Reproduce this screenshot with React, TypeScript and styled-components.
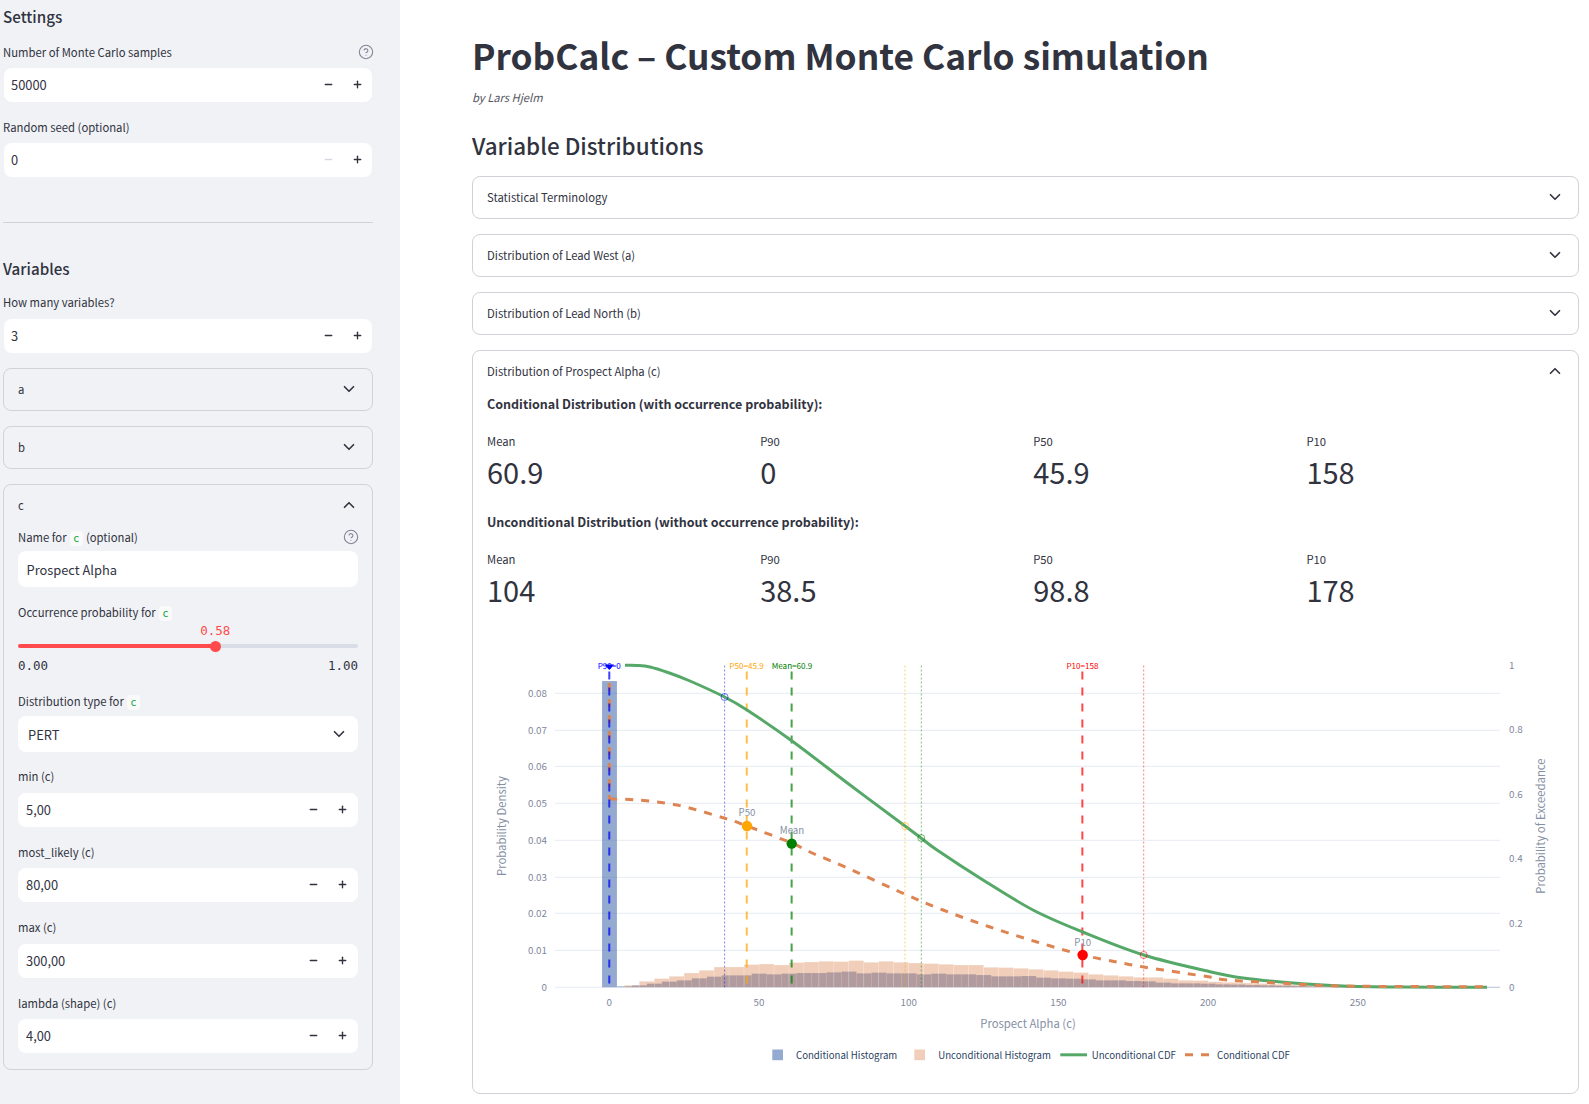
import React from "react";
import styled, { createGlobalStyle } from "styled-components";
import { ChevronDown, ChevronUp, CircleHelp, Minus, Plus } from "lucide-react";

const SANS = `"Noto Sans CJK JP", "Noto Sans", "Liberation Sans", sans-serif`;
const MONO = `"DejaVu Sans Mono", "Liberation Mono", monospace`;

const Global = createGlobalStyle`
  html, body { margin: 0; padding: 0; background: #fff; height: 1104px; overflow: hidden; }
  body { font-family: ${SANS}; color: #31333f; font-size: 14px; }
  * { box-sizing: border-box; }
`;

const Page = styled.div`
  display: flex;
  width: 1589px;
  height: 1104px;
  overflow: hidden;
`;

const Sidebar = styled.aside`
  flex: 0 0 400px;
  height: 1104px;
  background: #f0f2f6;
  padding: 0 27px 0 3px;
`;

const SideHeading = styled.h2<{ $top?: number }>`
  margin: ${(p) => p.$top ?? 0}px 0 0;
  height: 34px;
  line-height: 32px;
  font-size: 15.2px;
  font-weight: 500;
  color: #31333f;
`;

const Field = styled.div<{ $top: number }>`
  margin-top: ${(p) => p.$top}px;
`;

const LabelRow = styled.div<{ $gap?: number }>`
  display: flex;
  align-items: center;
  justify-content: space-between;
  height: 21px;
  margin-bottom: ${(p) => p.$gap ?? 5}px;
  font-size: 11.3px;
  color: #31333f;
`;

const Help = styled(CircleHelp)`
  color: #808495;
  flex: none;
  margin-right: -1px;
`;

const Chip = styled.code`
  display: inline-block;
  font-family: ${MONO};
  font-size: 10.5px;
  line-height: 14px;
  height: 15px;
  padding: 0 3.5px;
  margin: 0 3px;
  color: #09ab3b;
  background: #fafafa;
  border-radius: 4px;
  vertical-align: 0;
`;

const NumberBox = styled.div<{ $inset?: boolean }>`
  display: flex;
  align-items: center;
  height: 34px;
  margin: 0 ${(p) => (p.$inset ? 0 : 1)}px;
  padding: 0 ${(p) => (p.$inset ? 1 : 0)}px 0 ${(p) => (p.$inset ? 8 : 7)}px;
  background: #fff;
  border-radius: 8px;
  font-size: 12.85px;
`;

const NumberValue = styled.span`
  flex: 1;
`;

const StepButton = styled.span<{ $off?: boolean }>`
  display: flex;
  align-items: center;
  justify-content: center;
  width: 29px;
  height: 34px;
  color: ${(p) => (p.$off ? "#d5dae4" : "#31333f")};
`;

const Divider = styled.hr`
  margin: 45px 0 29px;
  border: 0;
  border-top: 1px solid #cfd1d6;
  height: 0;
`;

const Expander = styled.section<{ $top?: number }>`
  margin-top: ${(p) => p.$top ?? 15}px;
  border: 1px solid #d0d2d7;
  border-radius: 8px;
`;

const ExpanderHeader = styled.div`
  display: flex;
  align-items: center;
  justify-content: space-between;
  height: 41px;
  padding: 0 14px 0 14px;
  font-size: 11.3px;
  color: #31333f;
`;

const SideBody = styled.div`
  padding: 1px 14px 16px;
`;

const TextBox = styled.div`
  display: flex;
  align-items: center;
  justify-content: space-between;
  height: 36px;
  padding: 0 8.5px;
  background: #fff;
  border-radius: 8px;
  font-size: 12.85px;
`;

const SelectBox = styled(TextBox)`
  padding: 0 10px;
`;

const SliderBlock = styled.div`
  margin-top: 1px;
  margin-bottom: 16px;
`;

const SliderValue = styled.div`
  position: relative;
  height: 14px;
  font-family: ${MONO};
  font-size: 12.5px;
  line-height: 14px;
  color: #ff4b4b;
`;

const SliderValueText = styled.span`
  position: absolute;
  top: 0;
  transform: translateX(-50%);
`;

const Track = styled.div`
  position: relative;
  height: 4px;
  margin-top: 6.5px;
  border-radius: 2px;
  background: #d9dee6;
`;

const TrackFill = styled.div`
  height: 4px;
  border-radius: 2px;
  background: #ff4b4b;
`;

const Thumb = styled.div`
  position: absolute;
  top: -3.5px;
  width: 11px;
  height: 11px;
  margin-left: -5.5px;
  border-radius: 50%;
  background: #ff4b4b;
`;

const RangeRow = styled.div`
  display: flex;
  justify-content: space-between;
  height: 18px;
  margin-top: 9px;
  font-family: ${MONO};
  font-size: 12.5px;
  line-height: 18px;
  color: #31333f;
`;

const Main = styled.main`
  flex: 1;
  min-width: 0;
  padding: 25px 10.5px 0 72px;
`;

const Title = styled.h1`
  margin: 0;
  height: 60px;
  line-height: 60px;
  font-size: 35.3px;
  font-weight: 700;
  color: #31333f;
  white-space: nowrap;
`;

const Byline = styled.p`
  margin: 2px 0 0;
  height: 21px;
  line-height: 21px;
  font-size: 11.2px;
  font-style: italic;
  color: #55565f;
`;

const SectionTitle = styled.h3`
  margin: 18px 0 9.5px;
  height: 40px;
  line-height: 38px;
  font-size: 22.45px;
  font-weight: 500;
  color: #31333f;
`;

const MainBody = styled.div`
  padding: 1px 14px 0;
`;

const StatHeading = styled.p<{ $top?: number }>`
  margin: ${(p) => p.$top ?? 0}px 0 0;
  height: 21px;
  line-height: 21px;
  font-size: 12.5px;
  font-weight: 700;
`;

const MetricGrid = styled.div`
  display: grid;
  grid-template-columns: repeat(4, 1fr);
  column-gap: 16px;
  margin-top: 17px;
`;

const MetricLabel = styled.div`
  height: 21px;
  line-height: 21px;
  font-size: 11.25px;
`;

const MetricValue = styled.div`
  height: 40px;
  line-height: 39px;
  font-size: 29px;
`;

const ChartSvg = styled.svg`
  display: block;
  width: 1076px;
  height: 443px;
  margin-top: 40px;
`;

const Tick = styled.text`
  font-family: ${SANS};
  font-size: 9.8px;
  fill: #7f889c;
`;

const AxisTitle = styled.text`
  font-family: ${SANS};
  font-size: 11.3px;
  fill: #8590a5;
`;

const Callout = styled.text`
  font-family: ${SANS};
  font-size: 8.1px;
`;

const PointLabel = styled.text`
  font-family: ${SANS};
  font-size: 9.7px;
  fill: #858fa3;
`;

const LegendText = styled.text`
  font-family: ${SANS};
  font-size: 9.65px;
  fill: #2a3f5f;
`;

const Stepper = () => (
  <>
    <StepButton>
      <Minus size={11} strokeWidth={3} />
    </StepButton>
    <StepButton>
      <Plus size={11} strokeWidth={3} />
    </StepButton>
  </>
);

const NumberField = ({ label, value, top, inset, off, gap }: { label: string; value: string; top: number; inset?: boolean; off?: boolean; gap?: number }) => (
  <Field $top={top}>
    <LabelRow $gap={gap}>{label}</LabelRow>
    <NumberBox $inset={inset}>
      <NumberValue>{value}</NumberValue>
      {off ? (
        <>
          <StepButton $off>
            <Minus size={11} strokeWidth={3} />
          </StepButton>
          <StepButton>
            <Plus size={11} strokeWidth={3} />
          </StepButton>
        </>
      ) : (
        <Stepper />
      )}
    </NumberBox>
  </Field>
);

const Collapsed = ({ label, top }: { label: string; top?: number }) => (
  <Expander $top={top}>
    <ExpanderHeader>
      {label}
      <ChevronDown size={18} strokeWidth={2.2} />
    </ExpanderHeader>
  </Expander>
);

const Metrics = ({ items }: { items: [string, string][] }) => (
  <MetricGrid>
    {items.map(([k, v]) => (
      <div key={k}>
        <MetricLabel>{k}</MetricLabel>
        <MetricValue>{v}</MetricValue>
      </div>
    ))}
  </MetricGrid>
);

/* ---------- chart ---------- */
const X = (v: number) => 609.3 + 2.994 * v;
const BASE = 987.3;

const GRID = [693.3, 730.3, 766.3, 803.3, 840.3, 877.3, 913.3, 950.3, 987.3];
const LEFT_TICKS = ["0.08", "0.07", "0.06", "0.05", "0.04", "0.03", "0.02", "0.01", "0"];
const RIGHT_TICKS: [string, number][] = [["1", 665.3], ["0.8", 729.7], ["0.6", 794.3], ["0.4", 858.7], ["0.2", 923.3], ["0", 987.3]];
const X_TICKS = [0, 50, 100, 150, 200, 250];

const UNCOND = [2, 6, 8.7, 11, 14.3, 17, 20.3, 20.3, 22.7, 23.3, 22.3, 24.7, 25.3, 26, 25.7, 26.7, 25, 26, 25, 24.3, 23.7, 23, 22.3, 22.3, 20, 19.7, 19, 18, 17, 15.7, 14.7, 13, 12, 11, 10, 10, 8.7, 7, 6.7, 5.5, 5, 4.3, 3.7, 3, 2.5, 2, 1.5, 1.2, 1, 0.7, 0.5, 0.3, 0.2, 0.1];
const COND = [1, 2, 3.7, 5.7, 7, 9, 10.7, 12, 12, 13.7, 13, 13.7, 14.3, 14.3, 15, 15.7, 14, 14.7, 14, 14, 13, 13.7, 13, 13, 12.3, 11, 11, 11.3, 9.7, 9, 8.7, 8, 7, 7, 6.3, 6, 4.7, 4, 4, 3.7, 3, 2.8, 2.3, 2, 1.7, 1.3, 1, 0.8, 0.6, 0.4, 0.3, 0.2, 0.1];

const GREEN_CURVE: [number, number][] = [[625, 665.3], [637, 665.4], [650, 667], [668, 672.5], [690, 681], [724.6, 697], [747, 710], [791.7, 740.7], [850, 785], [905, 826], [921, 838], [937, 850], [983, 880], [1033, 910], [1082.7, 932], [1143.7, 955], [1210, 971.7], [1243, 978], [1293, 983], [1343, 986], [1400, 987], [1487, 987.2]];
const ORANGE_CURVE: [number, number][] = [[609.3, 799], [637, 800], [677, 805], [724, 818], [747, 826], [791.7, 843], [810, 852], [852, 870], [900, 892], [943, 910], [990, 927], [1037, 942], [1082.7, 955], [1117, 962], [1143.7, 967], [1183, 973], [1210, 977], [1227, 980], [1277, 983], [1343, 986], [1487, 986.8]];

const smooth = (pts: [number, number][]) => {
  let d = `M${pts[0][0]} ${pts[0][1]}`;
  for (let i = 0; i < pts.length - 1; i++) {
    const p0 = pts[Math.max(i - 1, 0)];
    const p1 = pts[i];
    const p2 = pts[i + 1];
    const p3 = pts[Math.min(i + 2, pts.length - 1)];
    const c1x = p1[0] + (p2[0] - p0[0]) / 6;
    const c1y = p1[1] + (p2[1] - p0[1]) / 6;
    const c2x = p2[0] - (p3[0] - p1[0]) / 6;
    const c2y = p2[1] - (p3[1] - p1[1]) / 6;
    d += ` C${c1x.toFixed(1)} ${c1y.toFixed(1)} ${c2x.toFixed(1)} ${c2y.toFixed(1)} ${p2[0]} ${p2[1]}`;
  }
  return d;
};

const BOLD_LINES: [number, string][] = [[X(45.9), "#ffa500"], [X(60.9), "#008000"], [X(158), "#ff0000"]];
const DOT_LINES: [number, string, number][] = [[724.6, "#0000ff", 697], [905, "#ffa500", 826], [921.3, "#008000", 838], [1143.7, "#ff0000", 955]];

const Chart = () => (
  <ChartSvg viewBox="487 650 1076 443">
    {GRID.map((y) => (
      <line key={y} x1={555} x2={1500} y1={y} y2={y} stroke="#e6eaf3" strokeWidth={1} />
    ))}
    {GRID.map((y, i) => (
      <Tick key={y} x={547} y={y + 3.5} textAnchor="end">{LEFT_TICKS[i]}</Tick>
    ))}
    {RIGHT_TICKS.map(([t, y]) => (
      <Tick key={t} x={1509} y={y + 3.5}>{t}</Tick>
    ))}
    {X_TICKS.map((v) => (
      <Tick key={v} x={X(v)} y={1006} textAnchor="middle">{v}</Tick>
    ))}
    <AxisTitle x={1028} y={1028} textAnchor="middle">Prospect Alpha (c)</AxisTitle>
    <AxisTitle transform="translate(506 826) rotate(-90)" textAnchor="middle">Probability Density</AxisTitle>
    <AxisTitle transform="translate(1545 826) rotate(-90)" textAnchor="middle">Probability of Exceedance</AxisTitle>

    <g fill="#4c72b0" fillOpacity={0.6} stroke="#fff" strokeOpacity={0.25} strokeWidth={0.5}>
      <rect x={602} y={681} width={15} height={BASE - 681} />
      {COND.map((h, i) => (
        <rect key={i} x={617 + i * 14.97} y={BASE - h} width={14.97} height={h} />
      ))}
    </g>
    <g fill="#dd8452" fillOpacity={0.4} stroke="#fff" strokeOpacity={0.35} strokeWidth={0.5}>
      {UNCOND.map((h, i) => (
        <rect key={i} x={624.3 + i * 14.97} y={BASE - h} width={14.97} height={h} />
      ))}
    </g>
    <line x1={1440} x2={1500} y1={BASE} y2={BASE} stroke="#b9c7df" strokeWidth={1} />

    {DOT_LINES.map(([x, c]) => (
      <line key={x} x1={x} x2={x} y1={665.5} y2={BASE} stroke={c} strokeOpacity={0.5} strokeWidth={1} strokeDasharray="2 2" />
    ))}
    {BOLD_LINES.map(([x, c]) => (
      <line key={x} x1={x} x2={x} y1={671.5} y2={BASE} stroke={c} strokeOpacity={0.72} strokeWidth={2} strokeDasharray="8 8" />
    ))}

    <path d={smooth(GREEN_CURVE)} fill="none" stroke="#55a868" strokeWidth={3} />
    <line x1={609.3} x2={609.3} y1={683} y2={799} stroke="#dd8452" strokeWidth={3} strokeDasharray="8 8" />
    <path d={smooth(ORANGE_CURVE)} fill="none" stroke="#dd8452" strokeWidth={3} strokeDasharray="8 8" />
    <line x1={609.3} x2={609.3} y1={671.5} y2={BASE} stroke="#0000ff" strokeOpacity={0.75} strokeWidth={2} strokeDasharray="8 8" />

    {DOT_LINES.map(([x, c, y]) => (
      <circle key={x} cx={x} cy={y} r={3.5} fill="none" stroke={c} strokeOpacity={0.55} strokeWidth={1} />
    ))}

    <path d="M604.5 664.5h9.6l-4.8 5.5z" fill="#0000ff" />
    <Callout x={609.3} y={668.6} textAnchor="middle" fill="#0000ff">P90=0</Callout>
    <Callout x={746.5} y={668.6} textAnchor="middle" fill="#ffa500">P50=45.9</Callout>
    <Callout x={792} y={668.6} textAnchor="middle" fill="#008000">Mean=60.9</Callout>
    <Callout x={1082.5} y={668.6} textAnchor="middle" fill="#ff0000">P10=158</Callout>

    <circle cx={747} cy={826} r={5.2} fill="#ffa500" />
    <circle cx={791.7} cy={843.6} r={5.2} fill="#008000" />
    <circle cx={1082.7} cy={955} r={5.2} fill="#ff0000" />
    <PointLabel x={747} y={816} textAnchor="middle">P50</PointLabel>
    <PointLabel x={792} y={833.5} textAnchor="middle">Mean</PointLabel>
    <PointLabel x={1082.7} y={945.5} textAnchor="middle">P10</PointLabel>

    <rect x={772.3} y={1049.5} width={10.7} height={10.7} fill="#4c72b0" fillOpacity={0.6} />
    <LegendText x={796} y={1058.5}>Conditional Histogram</LegendText>
    <rect x={914.3} y={1049.5} width={10.7} height={10.7} fill="#dd8452" fillOpacity={0.4} />
    <LegendText x={938.3} y={1058.5}>Unconditional Histogram</LegendText>
    <line x1={1060.3} x2={1087} y1={1054.8} y2={1054.8} stroke="#55a868" strokeWidth={3} />
    <LegendText x={1091.7} y={1058.5}>Unconditional CDF</LegendText>
    <line x1={1185} x2={1212} y1={1054.8} y2={1054.8} stroke="#dd8452" strokeWidth={3} strokeDasharray="8 8" />
    <LegendText x={1217} y={1058.5}>Conditional CDF</LegendText>
  </ChartSvg>
);

export default function App() {
  return (
    <Page>
      <Global />
      <Sidebar>
        <SideHeading>Settings</SideHeading>
        <Field $top={7.5}>
          <LabelRow>
            Number of Monte Carlo samples
            <Help size={16} strokeWidth={1.6} />
          </LabelRow>
          <NumberBox>
            <NumberValue>50000</NumberValue>
            <Stepper />
          </NumberBox>
        </Field>
        <NumberField label="Random seed (optional)" value="0" top={15} off />
        <Divider />
        <SideHeading>Variables</SideHeading>
        <NumberField label="How many variables?" value="3" top={6} gap={6} />
        <Collapsed label="a" />
        <Collapsed label="b" />
        <Expander>
          <ExpanderHeader>
            c
            <ChevronUp size={18} strokeWidth={2.2} />
          </ExpanderHeader>
          <SideBody>
            <LabelRow $gap={3.5}>
              <span>
                Name for<Chip>c</Chip>(optional)
              </span>
              <Help size={16} strokeWidth={1.6} />
            </LabelRow>
            <TextBox>Prospect Alpha</TextBox>
            <Field $top={14.5}>
              <LabelRow $gap={0}>
                <span>
                  Occurrence probability for<Chip>c</Chip>
                </span>
              </LabelRow>
              <SliderBlock>
                <SliderValue>
                  <SliderValueText style={{ left: "58%" }}>0.58</SliderValueText>
                </SliderValue>
                <Track>
                  <TrackFill style={{ width: "58%" }} />
                  <Thumb style={{ left: "58%" }} />
                </Track>
                <RangeRow>
                  <span>0.00</span>
                  <span>1.00</span>
                </RangeRow>
              </SliderBlock>
            </Field>
            <LabelRow $gap={4}>
              <span>
                Distribution type for<Chip>c</Chip>
              </span>
            </LabelRow>
            <SelectBox>
              PERT
              <ChevronDown size={18} strokeWidth={2.2} />
            </SelectBox>
            <NumberField label="min (c)" value="5,00" top={13.5} inset gap={6} />
            <NumberField label="most_likely (c)" value="80,00" top={15} inset />
            <NumberField label="max (c)" value="300,00" top={15} inset gap={6} />
            <NumberField label="lambda (shape) (c)" value="4,00" top={15} inset gap={5} />
          </SideBody>
        </Expander>
      </Sidebar>
      <Main>
        <Title>ProbCalc – Custom Monte Carlo simulation</Title>
        <Byline>by Lars Hjelm</Byline>
        <SectionTitle>Variable Distributions</SectionTitle>
        <Collapsed label="Statistical Terminology" top={0} />
        <Collapsed label="Distribution of Lead West (a)" />
        <Collapsed label="Distribution of Lead North (b)" />
        <Expander>
          <ExpanderHeader>
            Distribution of Prospect Alpha (c)
            <ChevronUp size={18} strokeWidth={2.2} />
          </ExpanderHeader>
          <MainBody>
            <StatHeading>Conditional Distribution (with occurrence probability):</StatHeading>
            <Metrics items={[["Mean", "60.9"], ["P90", "0"], ["P50", "45.9"], ["P10", "158"]]} />
            <StatHeading $top={19}>Unconditional Distribution (without occurrence probability):</StatHeading>
            <Metrics items={[["Mean", "104"], ["P90", "38.5"], ["P50", "98.8"], ["P10", "178"]]} />
            <Chart />
          </MainBody>
        </Expander>
      </Main>
    </Page>
  );
}
